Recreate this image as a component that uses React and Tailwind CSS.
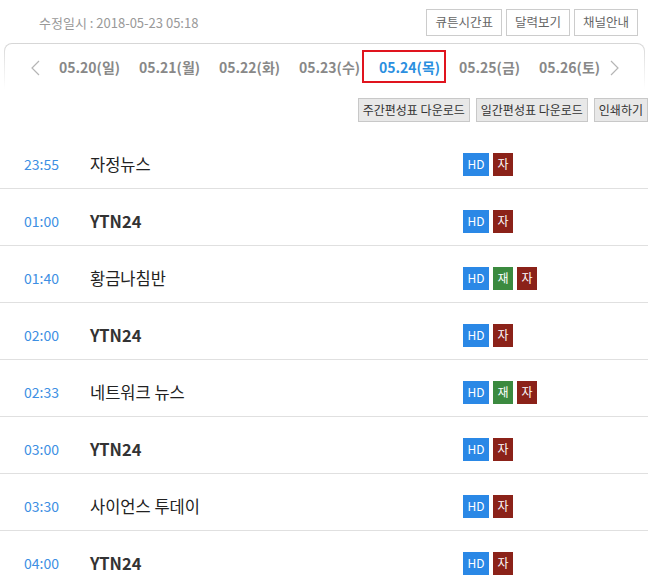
import React from "react";

const dates = [
  "05.20(일)",
  "05.21(월)",
  "05.22(화)",
  "05.23(수)",
  "05.24(목)",
  "05.25(금)",
  "05.26(토)",
];

const programs = [
  { time: "23:55", title: "자정뉴스", re: false },
  { time: "01:00", title: "YTN24", re: false, bold: true },
  { time: "01:40", title: "황금나침반", re: true },
  { time: "02:00", title: "YTN24", re: false, bold: true },
  { time: "02:33", title: "네트워크 뉴스", re: true },
  { time: "03:00", title: "YTN24", re: false, bold: true },
  { time: "03:30", title: "사이언스 투데이", re: false },
  { time: "04:00", title: "YTN24", re: false, bold: true },
];

function Chevron({ dir }) {
  return (
    <svg width="9" height="16" viewBox="0 0 9 16" className="shrink-0">
      <polyline
        points={dir === "left" ? "8,1 1,8 8,15" : "1,1 8,8 1,15"}
        fill="none"
        stroke="#b5b5b5"
        strokeWidth="1.2"
      />
    </svg>
  );
}

export default function App() {
  return (
    <div className="w-[648px] bg-white font-['Noto_Sans_CJK_KR',sans-serif]">
      {/* header */}
      <div className="flex items-center justify-between pt-[9px] pl-[39px] pr-[10px]">
        <span className="text-[13px] text-[#999]">수정일시 : 2018-05-23 05:18</span>
        <div className="flex gap-[4px]">
          {["큐튼시간표", "달력보기", "채널안내"].map((b) => (
            <button
              key={b}
              className="h-[27px] border border-[#ccc] bg-white px-[8px] text-[12.5px] leading-none text-[#666]"
            >
              {b}
            </button>
          ))}
        </div>
      </div>

      {/* date nav */}
      <div className="ml-[4px] mt-[7px] w-[641px] h-[46px] rounded-t-[8px] bg-gradient-to-b from-[#d6d6d6] via-[#ececec] to-white px-[1px] pt-[1px]">
        <div className="flex h-full items-center rounded-t-[7px] bg-white">
          <span className="ml-[26px] mr-[2px] mt-[2px]">
            <Chevron dir="left" />
          </span>
          <div className="flex items-center">
            {dates.map((d, i) => (
              <div
                key={d}
                className={`flex h-[33px] w-[84px] items-center border-2 pl-[15px] text-[14px] font-bold leading-none ${
                  i > 0 ? "-ml-[4px]" : ""
                } ${
                  i === 4
                    ? "relative border-[#e0141e] text-[#2b8fdf]"
                    : "border-transparent text-[#888]"
                }`}
              >
                {d}
              </div>
            ))}
          </div>
          <span className="ml-[4px] mt-[2px]">
            <Chevron dir="right" />
          </span>
        </div>
      </div>

      {/* download buttons */}
      <div className="mt-[9px] flex justify-end gap-[6px]">
        {["주간편성표 다운로드", "일간편성표 다운로드", "인쇄하기"].map((b) => (
          <button
            key={b}
            className="h-[24px] border border-[#c8c8c8] bg-[#e8e8e8] px-[4px] text-[12px] leading-none text-[#333]"
          >
            {b}
          </button>
        ))}
      </div>

      {/* schedule */}
      <ul className="mt-[10px]">
        {programs.map((p, i) => (
          <li
            key={i}
            className="flex h-[57px] items-center border-b border-[#e0e0e0] pt-[8px]"
          >
            <span className="w-[90px] pl-[24px] text-[14px] text-[#3d8fe3]">{p.time}</span>
            <span
              className={`w-[373px] text-[16.5px] ${p.bold ? "font-bold text-[#333]" : "font-normal text-[#222]"}`}
            >
              {p.title}
            </span>
            <div className="flex gap-[4px] text-[12px] leading-none text-white">
              <span className="flex h-[23px] w-[26px] items-center justify-center bg-[#2a88e6]">HD</span>
              {p.re && (
                <span className="flex h-[23px] w-[20px] items-center justify-center bg-[#3b8a3f]">재</span>
              )}
              <span className="flex h-[23px] w-[20px] items-center justify-center bg-[#8b2219]">자</span>
            </div>
          </li>
        ))}
      </ul>
    </div>
  );
}
